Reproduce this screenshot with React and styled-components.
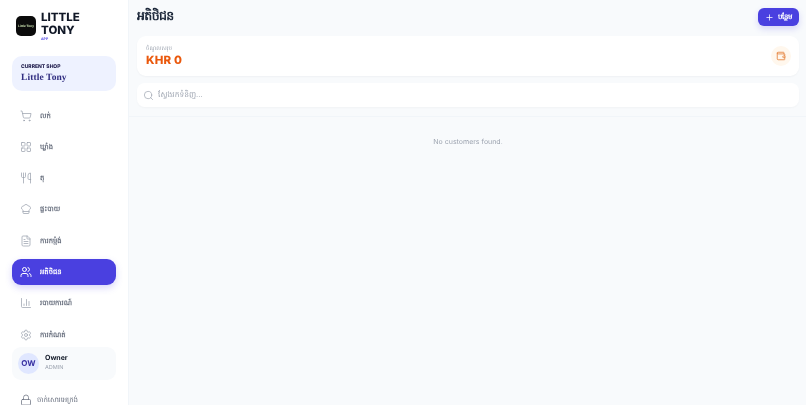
import React from "react";
import styled, { createGlobalStyle } from "styled-components";
import { ShoppingCart, LayoutGrid, Utensils, ChefHat, FileText, Users, BarChart3, Settings, Lock, Search, Plus, Wallet } from "lucide-react";

const Global = createGlobalStyle`
  html, body { margin: 0; padding: 0; height: 100%; overflow: hidden; }
  body { font-family: Inter, "Noto Sans", sans-serif; background: #f8fafc; text-rendering: geometricPrecision; }
  * { box-sizing: border-box; }
`;
const Shell = styled.div`display: flex; width: 806px; height: 405px; overflow: hidden; will-change: transform;`;
const Sidebar = styled.aside`
  width: 129px; flex: none; background: #fff; border-right: 1px solid #f1f5f9;
  padding: 10px 12px 0; display: flex; flex-direction: column; overflow: hidden;
`;
const Brand = styled.div`display: flex; align-items: center; gap: 5px; height: 32px; margin: 0 0 14px 4px; flex: none;`;
const Logo = styled.div`
  width: 20px; height: 20px; border-radius: 5px; background: #0b0b0b; color: #cfe8b4;
  font: 700 3.2px "Liberation Sans", sans-serif; display: flex; align-items: center; justify-content: center; white-space: nowrap;
`;
const BrandLine = styled.div`font: 800 11.5px/13px Inter, sans-serif; color: #111827;`;
const Tiny = styled.div`font: 700 3.5px/5px Inter, sans-serif; color: #4f46e5;`;
const Shop = styled.div`background: #eef2ff; border-radius: 10px; height: 35px; padding: 7px 9px; margin-bottom: 11.5px; flex: none;`;
const ShopLabel = styled.div`font: 800 5px/8px Inter, sans-serif; color: #1e1b4b;`;
const ShopName = styled.div`font: 700 9.5px/14px "Liberation Serif", serif; color: #312e81; letter-spacing: .1px;`;
const Nav = styled.nav`display: flex; flex-direction: column; gap: 5.3px; flex: none;`;
const Item = styled.div`
  height: 26px; border-radius: 9px; display: flex; align-items: center; gap: 8px; padding-left: 8px;
  color: ${p => p.$active ? "#fff" : "#6b7280"};
  background: ${p => p.$active ? "#4a40e0" : "transparent"};
  box-shadow: ${p => p.$active ? "0 3px 7px rgba(79,70,229,.22)" : "none"};
  font: 700 6.8px/12px Inter, sans-serif;
  svg { color: ${p => p.$active ? "#fff" : "#9ca3af"}; }
`;
const User = styled.div`
  background: #f8fafc; border-radius: 9px; height: 33px; display: flex; align-items: center; gap: 6px;
  padding-left: 6px; margin-top: -1px; flex: none;
`;
const Avatar = styled.div`width: 21px; height: 21px; border-radius: 50%; background: #e0e7ff; color: #3730a3; font: 700 8px/21px Inter, sans-serif; text-align: center;`;
const UserName = styled.div`font: 700 7px/10px Inter, sans-serif; color: #111827;`;
const UserRole = styled.div`font: 400 5.5px/10px Inter, sans-serif; color: #9ca3af;`;
const LockRow = styled.div`
  display: flex; align-items: center; gap: 5px; padding-left: 8px; margin-top: 14px; flex: none;
  color: #6b7280; font: 500 7px/12px Inter, sans-serif; letter-spacing: -.2px;
  svg { color: #6b7280; }
`;
const Main = styled.main`flex: 1; padding: 8px 7px 0 8px; min-width: 0;`;
const Header = styled.header`display: flex; justify-content: space-between; align-items: center; height: 18px; margin-bottom: 10px;`;
const Title = styled.h1`margin: 0; font: 700 12.5px/18px Inter, sans-serif; letter-spacing: -.6px; color: #1e293b;`;
const AddButton = styled.button`
  width: 41px; height: 18px; border: 0; border-radius: 6px; background: #4a40e0; color: #fff;
  display: flex; align-items: center; justify-content: center; gap: 4px; padding: 0;
  font: 700 7px/10px Inter, sans-serif; box-shadow: 0 3px 6px rgba(79,70,229,.2);
`;
const Card = styled.section`
  height: 40px; background: #fff; border-radius: 9px; box-shadow: 0 1px 2px rgba(15,23,42,.04);
  display: flex; justify-content: space-between; align-items: center; padding: 0 8px 0 9px; margin-bottom: 7px;
`;
const CardLabel = styled.div`font: 400 5.5px/8px Inter, sans-serif; color: #9ca3af;`;
const Amount = styled.div`font: 800 11.5px/15px Inter, sans-serif; color: #ea580c; letter-spacing: .2px;`;
const WalletBadge = styled.div`width: 20px; height: 20px; border-radius: 50%; background: #fff7ed; color: #e5813a; display: flex; align-items: center; justify-content: center;`;
const SearchBar = styled.div`
  height: 24px; background: #fff; border-radius: 8px; box-shadow: 0 1px 2px rgba(15,23,42,.03);
  display: flex; align-items: center; gap: 4px; padding-left: 6px; color: #9ca3af; font: 400 7.5px/12px Inter, sans-serif;
`;
const Rule = styled.div`height: 1px; background: #f1f5f9; margin: 9px -7px 0 -8px;`;
const Empty = styled.div`text-align: center; margin-top: 20px; font: 400 7px/10px Inter, sans-serif; color: #9ca3af;`;

const items = [
  [ShoppingCart, "លក់"], [LayoutGrid, "ឃ្លាំង"], [Utensils, "តុ"], [ChefHat, "ផ្ទះបាយ"],
  [FileText, "ការកម្ម៉ង់"], [Users, "អតិថិជន", true], [BarChart3, "របាយការណ៍"], [Settings, "ការកំណត់"],
];

export default function App() {
  return (
    <Shell>
      <Global />
      <Sidebar>
        <Brand>
          <Logo>Little Tony</Logo>
          <div>
            <BrandLine>LITTLE</BrandLine>
            <BrandLine>TONY</BrandLine>
            <Tiny>APP</Tiny>
          </div>
        </Brand>
        <Shop><ShopLabel>CURRENT SHOP</ShopLabel><ShopName>Little Tony</ShopName></Shop>
        <Nav>
          {items.map(([Icon, label, active]) => (
            <Item key={label} $active={active}><Icon size={12} strokeWidth={active ? 2 : 1.5} />{label}</Item>
          ))}
        </Nav>
        <User>
          <Avatar>OW</Avatar>
          <div><UserName>Owner</UserName><UserRole>ADMIN</UserRole></div>
        </User>
        <LockRow><Lock size={12} strokeWidth={1.5} />ចាក់សោរអេក្រង់</LockRow>
      </Sidebar>
      <Main>
        <Header>
          <Title>អតិថិជន</Title>
          <AddButton><Plus size={9} />បន្ថែម</AddButton>
        </Header>
        <Card>
          <div><CardLabel>ចំណូលសរុប</CardLabel><Amount>KHR 0</Amount></div>
          <WalletBadge><Wallet size={10} strokeWidth={2} /></WalletBadge>
        </Card>
        <SearchBar><Search size={11} strokeWidth={1.5} />ស្វែងរកទំនិញ...</SearchBar>
        <Rule />
        <Empty>No customers found.</Empty>
      </Main>
    </Shell>
  );
}
